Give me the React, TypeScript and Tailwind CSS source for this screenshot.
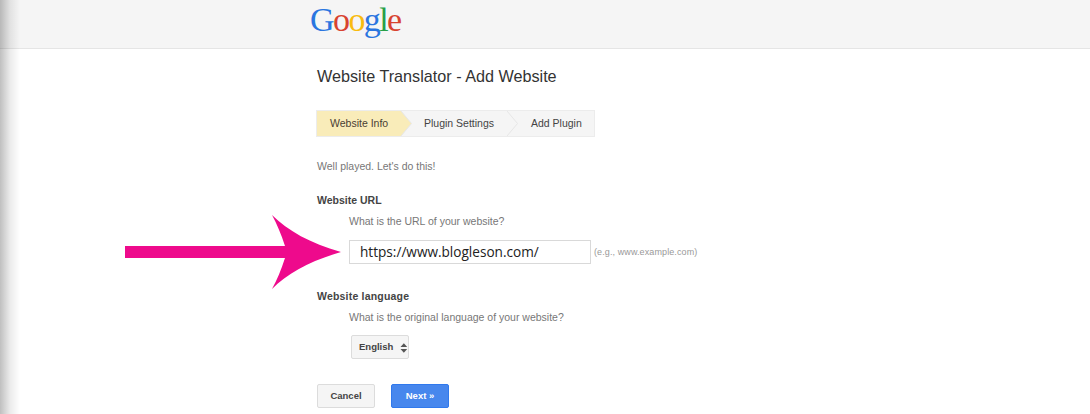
const FONT = "font-['Liberation_Sans',Arial,sans-serif]";

function GoogleLogo() {
  return (
    <div className="flex h-[48px] items-start pl-[310px] font-['Liberation_Serif',serif] text-[34px] leading-[39px] tracking-[-1.6px]">
      <span className="text-[#2a75e0]">G</span>
      <span className="text-[#d8432f]">o</span>
      <span className="text-[#f9bb0f]">o</span>
      <span className="text-[#2a75e0]">g</span>
      <span className="text-[#27a047]">l</span>
      <span className="text-[#d8432f]">e</span>
    </div>
  );
}

function Chevron({ fill, next }: { fill: string; next: string }) {
  return (
    <svg width="11" height="25" viewBox="0 0 11 25" className="shrink-0">
      <rect width="11" height="25" fill={next} />
      <path d="M0 0L10.5 12.5L0 25Z" fill={fill} />
      <path d="M0 0L10.5 12.5L0 25" fill="none" stroke="#e6e6e6" strokeWidth="1" />
    </svg>
  );
}

function Stepper() {
  return (
    <div className="mt-[25px] flex h-[25px] w-[277px] items-stretch bg-[#f5f5f5] text-[10.5px] leading-[25px] text-[#444] shadow-[0_0_0_1px_#ececec]">
      <div className="w-[84px] bg-[#f9ecb9] pl-[13px] text-[#4a4033]">Website Info</div>
      <Chevron fill="#f9ecb9" next="#f5f5f5" />
      <div className="w-[95px] pl-[12px]">Plugin Settings</div>
      <Chevron fill="#f5f5f5" next="#f5f5f5" />
      <div className="pl-[13px]">Add Plugin</div>
    </div>
  );
}

function PinkArrow() {
  return (
    <svg
      width="216"
      height="76"
      viewBox="0 0 216 76"
      className="pointer-events-none absolute left-[125px] top-[214px]"
    >
      <path
        d="M0 32H160C156 20 152 10 147 1C163 17 185 29 216 38C185 47 163 59 147 75C152 66 156 56 160 44H0Z"
        fill="#ee0a8c"
      />
    </svg>
  );
}

export default function App() {
  return (
    <div className={`relative h-[414px] w-[1090px] overflow-hidden bg-white ${FONT}`}>
      <header className="h-[49px] border-b border-[#e5e5e5] bg-[#f5f5f5]">
        <GoogleLogo />
      </header>
      <div className="pointer-events-none absolute inset-y-0 left-0 w-[20px] bg-gradient-to-r from-black/25 via-black/8 to-transparent" />

      <main className="pl-[317px]">
        <h1 className="mt-[17px] text-[16.2px] leading-[20px] text-[#333]">
          Website Translator - Add Website
        </h1>
        <Stepper />
        <p className="mt-[23px] text-[10.5px] leading-[14px] text-[#777]">Well played. Let's do this!</p>

        <h2 className="mt-[20px] text-[10.5px] font-bold leading-[14px] text-[#444]">Website URL</h2>
        <div className="pl-[32px]">
          <p className="mt-[7px] text-[10.5px] leading-[14px] text-[#777]">What is the URL of your website?</p>
          <div className="mt-[12px] flex items-center">
            <div className="h-[24px] w-[242px] border border-[#d9d9d9] pl-[10px] font-['Open_Sans',sans-serif] text-[13.6px] leading-[22px] text-[#222]">
              https://www.blogleson.com/
            </div>
            <span className="ml-[3px] mt-[1px] text-[9px] tracking-[0.1px] text-[#999]">(e.g., www.example.com)</span>
          </div>
        </div>

        <h2 className="mt-[25px] text-[10.5px] font-bold leading-[14px] tracking-[0.2px] text-[#444]">Website language</h2>
        <div className="pl-[32px]">
          <p className="mt-[7px] text-[10.5px] leading-[14px] text-[#777]">What is the original language of your website?</p>
          <div className="ml-[2px] mt-[11px] flex h-[24px] w-[58px] items-center rounded-[2px] border border-[#dcdcdc] bg-[#f5f5f5] pl-[7px] pt-[1px] text-[9.5px] font-bold text-[#444]">
            English
            <svg width="8" height="12" viewBox="0 0 8 12" className="ml-[7px]">
              <path d="M4 1L7.5 5H.5ZM4 11L.5 7H7.5Z" fill="#555" />
            </svg>
          </div>
        </div>

        <div className="mt-[25px] flex gap-[16px] text-[9.5px] font-bold">
          <div className="flex h-[24px] w-[58px] items-center justify-center rounded-[2px] border border-[#dcdcdc] bg-[#f5f5f5] text-[#444]">
            Cancel
          </div>
          <div className="flex h-[24px] w-[58px] items-center justify-center rounded-[2px] border border-[#3079ed] bg-[#4787ed] text-white">
            Next »
          </div>
        </div>
      </main>

      <PinkArrow />
    </div>
  );
}
